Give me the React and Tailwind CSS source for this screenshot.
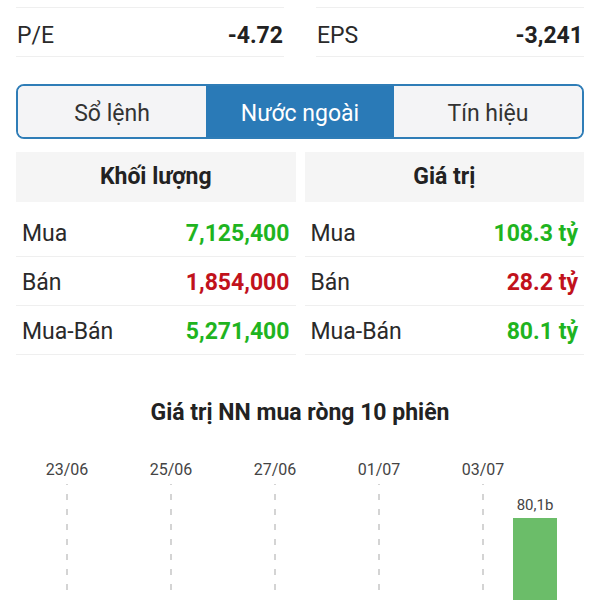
import React from 'react';

const volumeRows = [
    { label: 'Mua', value: '7,125,400', color: 'text-[#1fb41f]' },
    { label: 'Bán', value: '1,854,000', color: 'text-[#c1121c]' },
    { label: 'Mua-Bán', value: '5,271,400', color: 'text-[#1fb41f]' },
];

const valueRows = [
    { label: 'Mua', value: '108.3 tỷ', color: 'text-[#1fb41f]' },
    { label: 'Bán', value: '28.2 tỷ', color: 'text-[#c1121c]' },
    { label: 'Mua-Bán', value: '80.1 tỷ', color: 'text-[#1fb41f]' },
];

const tabs = ['Sổ lệnh', 'Nước ngoài', 'Tín hiệu'];

// 10 sessions, a label on every other one
const sessions = ['23/06', '', '25/06', '', '27/06', '', '01/07', '', '03/07', ''];

const StatCell = ({ label, value }) => (
    <div>
        <div className="h-2 border-b border-[#efefef]" />
        <div className="flex h-[49px] items-center justify-between border-b border-[#efefef] px-px pt-2">
            <span className="text-[23px] text-[#2a2a2a]">{label}</span>
            <span className="text-[23px] font-bold text-[#222]">{value}</span>
        </div>
    </div>
);

const FlowColumn = ({ title, rows }) => (
    <div>
        <div className="flex h-[50px] items-center justify-center bg-[#f5f5f5]">
            <span className="text-[23px] font-bold text-[#222]">{title}</span>
        </div>
        <div className="pt-1.5">
            {rows.map((row) => (
                <div
                    key={row.label}
                    className="flex h-[49px] items-center justify-between border-b border-[#efefef] px-1.5 pt-1"
                >
                    <span className="text-[23px] text-[#2a2a2a]">{row.label}</span>
                    <span className={`text-[23px] font-bold ${row.color}`}>{row.value}</span>
                </div>
            ))}
        </div>
    </div>
);

const DashLine = () => (
    <svg width="2" height="115" className="block">
        <line x1="1" y1="0" x2="1" y2="115" stroke="#b8b8b8" strokeWidth="1.2" strokeDasharray="6 9" strokeDashoffset="5" />
    </svg>
);

export default function App() {
    return (
        <div className="h-[600px] w-[600px] overflow-hidden bg-white font-['Roboto',sans-serif]">
            <div className="grid grid-cols-2 gap-8 px-4">
                <StatCell label="P/E" value="-4.72" />
                <StatCell label="EPS" value="-3,241" />
            </div>

            <div className="mx-4 mt-[27px] flex h-[55px] overflow-hidden rounded-lg border-2 border-[#2f7db7]">
                {tabs.map((tab, i) => (
                    <div
                        key={tab}
                        className={`flex flex-1 items-center justify-center pt-1.5 text-[23px] ${
                            i === 1 ? 'bg-[#2a7ab7] text-white' : 'bg-[#f4f4f6] text-[#333]'
                        }`}
                    >
                        {tab}
                    </div>
                ))}
            </div>

            <div className="mt-[13px] grid grid-cols-2 gap-[9px] px-4">
                <FlowColumn title="Khối lượng" rows={volumeRows} />
                <FlowColumn title="Giá trị" rows={valueRows} />
            </div>

            <div className="mt-[41px] text-center text-[23px] font-bold text-[#222]">
                Giá trị NN mua ròng 10 phiên
            </div>

            <div className="mt-[28px] flex pl-[41px]">
                {sessions.map((d, i) => (
                    <div key={i} className="flex w-[52px] flex-col items-center">
                        <span className="h-[22px] text-[16px] leading-[22px] text-[#444]">{d}</span>
                        {d ? (
                            <div className="mt-[3px]">
                                <DashLine />
                            </div>
                        ) : i === 9 ? (
                            <div className="flex flex-col items-center">
                                <span className="mt-[14px] text-[15px] leading-[20px] text-[#444]">80,1b</span>
                                <div className="mt-[3px] h-[90px] w-[44px] bg-[#6bbd69]" />
                            </div>
                        ) : null}
                    </div>
                ))}
            </div>
        </div>
    );
}
